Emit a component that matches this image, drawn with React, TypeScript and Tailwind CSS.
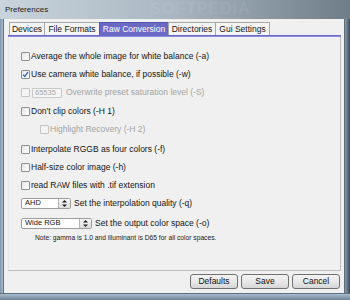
import React from "react";

const font = { fontFamily: '"Liberation Sans", Arial, sans-serif' };

function Check({ checked = false, disabled = false }: { checked?: boolean; disabled?: boolean }) {
  return (
    <div
      className={
        "w-[9px] h-[9px] shrink-0 rounded-[1px] border flex items-center justify-center " +
        (disabled
          ? "border-[#c4c4c4] bg-[#f4f4f4]"
          : "border-[#8e8f8f] bg-gradient-to-br from-[#e6e6e6] to-[#ffffff]")
      }
    >
      {checked && (
        <svg width="7" height="7" viewBox="0 0 7 7">
          <path d="M1 3.6 L2.8 5.4 L6 1.2" fill="none" stroke="#2f5fb8" strokeWidth="1.3" />
        </svg>
      )}
    </div>
  );
}

function Row({
  className = "",
  checked,
  disabled,
  children,
}: {
  className?: string;
  checked?: boolean;
  disabled?: boolean;
  children: React.ReactNode;
}) {
  return (
    <div className={"flex items-center gap-[1px] " + className}>
      <Check checked={checked} disabled={disabled} />
      <span className={disabled ? "text-[#a3a3a3]" : "text-[#141414]"}>{children}</span>
    </div>
  );
}

function Combo({ value, width }: { value: string; width: string }) {
  return (
    <div className={"flex h-[11px] border border-[#9d9d9d] rounded-[2px] bg-white " + width}>
      <div className="flex-1 flex items-center pl-[3px] text-[7.5px] text-[#111] leading-none">{value}</div>
      <div className="w-[12px] border-l border-[#b5b5b5] bg-gradient-to-b from-[#f6f6f6] to-[#dcdcdc] flex flex-col items-center justify-center gap-[1px]">
        <svg width="5" height="7" viewBox="0 0 5 7">
          <path d="M2.5 0 L5 2.6 L0 2.6 Z" fill="#222" />
          <path d="M2.5 7 L5 4.4 L0 4.4 Z" fill="#222" />
        </svg>
      </div>
    </div>
  );
}

function Btn({ label }: { label: string }) {
  return (
    <div className="w-[48px] h-[15px] rounded-[3px] border border-[#707070] bg-gradient-to-b from-[#f3f3f3] via-[#e8e8e8] to-[#d6d6d6] flex items-center justify-center text-[8.5px] text-[#111]">
      {label}
    </div>
  );
}

const tabs = [
  { label: "Devices", w: "w-[36px]" },
  { label: "File Formats", w: "w-[56px]" },
  { label: "Raw Conversion", w: "w-[70px]", sel: true },
  { label: "Directories", w: "w-[48px]" },
  { label: "Gui Settings", w: "w-[55px]" },
];

export default function App() {
  return (
    <div className="w-[350px] h-[300px] flex flex-col overflow-hidden bg-[#a7b7c6]" style={font}>
      {/* title bar */}
      <div className="h-[19px] relative bg-gradient-to-r from-[#c9d4dd] via-[#a9b6c1] to-[#6f7d89] flex items-center pl-[5px]">
        <span className="text-[8px] text-[#1a1a1a]">Preferences</span>
        <span className="absolute left-[150px] top-[1px] text-[16px] font-bold tracking-[1px] text-white/5 leading-none">
          SOFTPEDIA
        </span>
      </div>
      <div className="flex-1 flex">
        {/* left frame */}
        <div className="w-[4px] bg-gradient-to-r from-[#7f95aa] to-[#a9bccd] border-r border-[#5e6f80]" />
        {/* client */}
        <div className="flex-1 bg-[#f0f0f0] flex flex-col pl-[4px] pr-[2px] pt-[3px] text-[8.5px] leading-none">
          {/* tabs */}
          <div className="flex h-[13px] pl-[1px]">
            {tabs.map((t) => (
              <div
                key={t.label}
                className={
                  "h-[13px] flex items-center justify-center border-t border-l border-r -mr-px " +
                  t.w +
                  " " +
                  (t.sel
                    ? "bg-[#6a6ac6] text-white border-[#5656b0]"
                    : "bg-[#f4f4f4] text-[#141414] border-[#a8a8a8]")
                }
              >
                {t.label}
              </div>
            ))}
          </div>
          <div className="h-[2px] bg-[#8c8cdc] border-t border-[#6a6ac6] mr-[1px]" />
          {/* panel */}
          <div className="h-[234px] border-r border-b border-l border-[#bdbdbd] border-l-[#e6e6e6] mr-[1px] pl-[12px] pt-[10px] flex flex-col">
            <Row className="h-[18px]">Average the whole image for white balance (-a)</Row>
            <Row className="h-[18px]" checked>
              Use camera white balance, if possible (-w)
            </Row>
            <div className="h-[19px] flex items-center gap-[2px]">
              <Check disabled />
              <div className="w-[30px] h-[10px] border border-[#c8c8c8] bg-[#f6f6f6] rounded-[1px] flex items-center pl-[2px] text-[7.5px] text-[#a8a8a8]">
                65535
              </div>
              <span className="ml-[2px] text-[#a3a3a3]">Overwrite preset saturation level (-S)</span>
            </div>
            <Row className="h-[18px]">Don't clip colors (-H 1)</Row>
            <Row className="h-[18px] pl-[19px]" disabled>
              Highlight Recovery (-H 2)
            </Row>
            <Row className="h-[18px] mt-[2px]">Interpolate RGGB as four colors (-f)</Row>
            <Row className="h-[18px]">Half-size color image (-h)</Row>
            <Row className="h-[18px]">read RAW files with .tif extension</Row>
            <div className="h-[18px] flex items-center gap-[3px]">
              <Combo value="AHD" width="w-[50px]" />
              <span className="text-[#141414]">Set the interpolation quality (-q)</span>
            </div>
            <div className="h-[20px] mt-[1px] flex items-center gap-[3px]">
              <Combo value="Wide RGB" width="w-[71px]" />
              <span className="text-[#141414]">Set the output color space (-o)</span>
            </div>
            <div className="h-[10px] flex items-center pl-[14px] text-[6.7px] text-[#1a1a1a]">
              Note: gamma is 1.0 and illuminant is D65 for all color spaces.
            </div>
          </div>
          {/* buttons */}
          <div className="flex justify-end gap-[3px] pr-[2px] mt-[3px]">
            <Btn label="Defaults" />
            <Btn label="Save" />
            <Btn label="Cancel" />
          </div>
        </div>
        {/* right frame */}
        <div className="w-[6px] border-l border-[#5b6b7b] bg-gradient-to-r from-[#8e9ba6] to-[#3e4d5c]" />
      </div>
      {/* bottom frame */}
      <div className="h-[7px] border-t border-[#5e6f80] bg-gradient-to-b from-[#a9bccd] to-[#6f8497]" />
    </div>
  );
}
